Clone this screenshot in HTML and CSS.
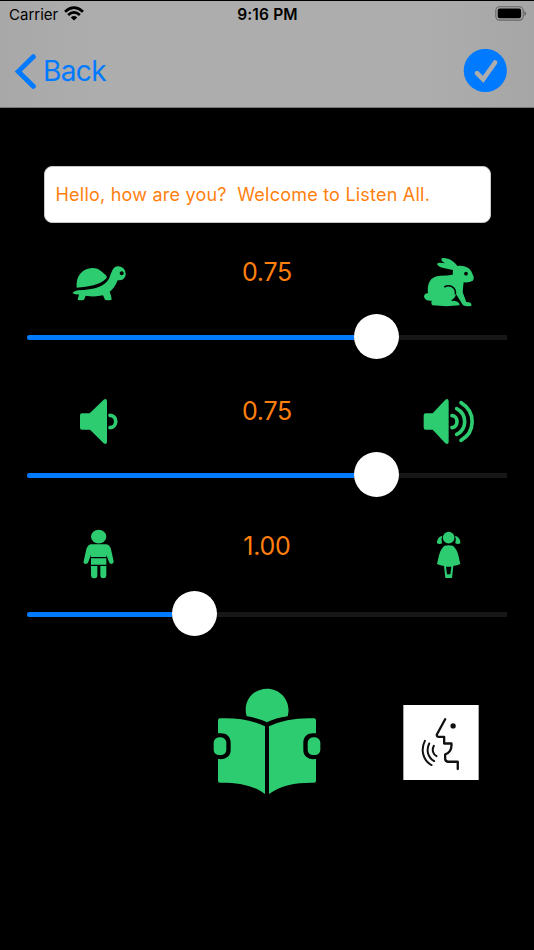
FILE: index.html
```html
<!DOCTYPE html>
<html lang="en">
<head>
<meta charset="utf-8">
<title>Listen All</title>
<link rel="stylesheet" href="styles.css">
</head>
<body>
<header class="header">
  <div class="status">
    <div class="carrier"><span class="carrier-name">Carrier</span>
      <svg class="wifi" viewBox="0 0 20 15"><g fill="none" stroke="#000" stroke-width="2.7"><path d="M1 5.7Q10-2.3 19 5.7"/><path d="M4.1 9.1Q10 3.7 15.9 9.1"/></g><path d="M6.8 11.4Q10 8.5 13.2 11.4L10 14.6Z"/></svg>
    </div>
    <span class="time">9:16 PM</span>
    <svg class="battery" viewBox="0 0 32 15"><rect x=".8" y=".7" width="27.4" height="13.4" rx="3.8" fill="none" stroke="#666" stroke-width="1.1"/><rect x="2.7" y="2.6" width="23.4" height="9.6" rx="2"/><path d="M29.4 5v5q1.7-.8 1.7-2.5T29.4 5Z" fill="#666"/></svg>
  </div>
  <nav class="nav">
    <a class="back"><svg class="chevron" viewBox="0 0 21 35"><path d="M18.300 2.700 3.200 17.500l15.100 14.800" fill="none" stroke="#007aff" stroke-width="5" stroke-linecap="round" stroke-linejoin="miter"/></svg><span class="back-label">Back</span></a>
    <svg class="done" viewBox="0 0 44 44"><circle cx="22.300" cy="21.500" r="21.600" fill="#007aff"/><path d="m14 24.100 6.100 6.300L32.100 13.500" fill="none" stroke="#adadad" stroke-width="4.600" stroke-linecap="round"/></svg>
  </nav>
</header>
<main>
  <div class="field"><span class="phrase">Hello, how are you?&nbsp; Welcome to Listen All.</span></div>

  <section class="control speed">
    <div class="row">
      <svg class="icon" viewBox="0 0 240 192"><path d="M50 113C47 77 67 55 98 54C117 54 124 65 136 74Q144 80 137 87C119 104 87 111 50 113Z"/><path fill-rule="evenodd" d="M37 129Q42 123 54 121C105 118 133 110 147 86C155 67 158 49 174 49C189 49 198 61 197 74C195 87 185 92 173 91C166 107 160 117 149 125Q155 139 155 149Q145 152 135 149L129 136Q103 142 77 137L72 149Q61 152 53 149L57 133Q48 135 37 129ZM185 64a6 6 0 1 0 .1 0Z"/></svg>
      <output class="value">0.75</output>
      <svg class="icon" viewBox="0 0 240 192"><path d="M42 140Q43 129 54 130C51 101 59 79 91 77Q111 77 128 74L129 60C110 56 88 53 82 44Q80 38 89 38L105 40Q91 33 95 25C112 21 131 33 142 48C162 45 182 53 187 71Q195 85 188 92Q178 99 161 97Q159 112 158 127L169 156Q187 156 184 167Q172 171 159 166L138 132Q136 145 122 152Q150 151 149 166Q110 171 68 166Q62 162 65 152Q46 154 42 140Z"/><path d="M103 111C120 101 139 113 136 133" fill="none" stroke="#000" stroke-width="4.500"/><circle cx="168" cy="71" r="5.500" fill="#000"/></svg>
    </div>
    <div class="slider"><div class="fill"></div><div class="thumb"></div></div>
  </section>

  <section class="control volume">
    <div class="row">
      <svg class="icon" viewBox="0 0 240 192"><path d="M66 70H89L131 29Q140 24 141 34V156Q140 166 131 160L90 119H66Q60 119 60 113V76Q60 70 66 70Z"/><path class="wave" d="M150 76C173 77 173 111 150 113"/></svg>
      <output class="value">0.75</output>
      <svg class="icon" viewBox="0 0 240 192"><path d="M47 70H68L106 29Q115 24 116 34V156Q115 166 106 160L68 119H47Q41 119 41 113V76Q41 70 47 70Z"/><path class="wave" d="M126 77C146 78 146 111 126 113M140 56C172 73 172 117 140 133M153 38C198 66 197 126 153 151"/></svg>
    </div>
    <div class="slider"><div class="fill"></div><div class="thumb"></div></div>
  </section>

  <section class="control pitch">
    <div class="row">
      <svg class="icon" viewBox="0 0 240 192"><ellipse cx="116" cy="50" rx="23" ry="20.500"/><path d="M93 73H139Q149 74 153 88L161 124Q162 131 155 132Q149 132 147 126L139 104V111H93V104L85 126Q83 132 77 132Q69 131 71 124L79 88Q83 74 93 73ZM93 115H139V134H93ZM93 138H112V168Q111 175 102 175Q94 175 93 168ZM121 138H139V168Q138 175 130 175Q122 175 121 168Z"/></svg>
      <output class="value">1.00</output>
      <svg class="icon" viewBox="0 0 240 192"><circle cx="116" cy="53" r="17.500"/><path d="M97 47Q92 57 96 70Q88 74 81 70Q80 52 97 47ZM135 47Q140 57 136 70Q144 74 151 70Q152 52 135 47ZM103 77Q116 74 129 77C145 91 147 115 151 132Q141 137 130 138L126 174H106L102 138Q91 137 81 132C86 114 87 91 103 77Z"/><path d="M108 140H124L121 163H111Z" fill="#000"/></svg>
    </div>
    <div class="slider"><div class="fill"></div><div class="thumb"></div></div>
  </section>

  <div class="actions">
    <svg class="reader" viewBox="0 0 402 372"><path d="M140 109C127 66 158 26 201 26C244 26 275 66 263 109Q227 114 201 127Q175 114 140 109Z"/><path d="M60 115Q139 112 195 139V342C160 315 111 307 60 308Q54 308 54 302V237C79 240 92 228 92 211V187C91 167 78 157 54 160V121Q54 115 60 115ZM342 115Q263 112 207 139V342C242 315 291 307 342 308Q348 308 348 302V237C323 240 310 228 310 211V187C311 167 324 157 348 160V121Q348 115 342 115Z"/><rect x="41" y="172" width="38" height="53" rx="16"/><rect x="323" y="172" width="38" height="53" rx="16"/></svg>
    <svg class="speak" viewBox="25 30 227 226"><rect x="25" y="30" width="227" height="226" fill="#fff"/><g fill="none" stroke="#111" stroke-width="7" stroke-linecap="round" stroke-linejoin="round"><path d="M151 73 126 119Q125 126 132 126H148V146H170C172 166 161 177 151 179V191Q151 201 161 201H189V223"/><path d="M90 138C77 163 83 197 110 211M103 146C93 166 99 189 118 199M117 153C110 166 115 179 125 184" stroke-width="6"/></g><circle cx="175" cy="93" r="8" fill="#111"/></svg>
  </div>
</main>
</body>
</html>
```
FILE: styles.css
```css
* { box-sizing: border-box; }
body {
  margin: 0;
  width: 534px;
  height: 950px;
  overflow: hidden;
  background: #000;
  font-family: Inter, "Liberation Sans", sans-serif;
}
svg { display: block; flex: none; }
.header {
  height: 108px;
  border-top: 1px solid #000;
  border-bottom: 1px solid #777;
  background: linear-gradient(90deg, #a8a8a8, #adadad 18%, #adadad 80%, #a6a6a6);
}
.status {
  display: grid;
  grid-template-columns: 1fr auto 1fr;
  align-items: center;
  height: 26px;
  padding: 0 7px 0 8px;
}
.carrier { display: flex; align-items: center; gap: 6px; padding-left: 1px; }
.carrier-name { font-size: 15px; }
.wifi { width: 20px; height: 15px; margin-top: -1px; }
.time { font-size: 15.500px; font-weight: 600; letter-spacing: 0.15px; }
.battery { width: 32px; height: 15px; margin-top: -1px; justify-self: end; }
.nav {
  display: flex;
  justify-content: space-between;
  align-items: center;
  height: 88px;
  padding: 0 27px 0 14.500px;
}
.back { display: flex; align-items: center; gap: 7.500px; color: #007aff; }
.chevron { width: 21px; height: 35px; }
.back-label { font-size: 28px; letter-spacing: -0.6px; }
.done { width: 44px; height: 44px; }
.field {
  display: flex;
  align-items: center;
  width: 447px;
  height: 57px;
  margin: 58px 0 27px 43.500px;
  padding: 0 11px 1px;
  border: 1.500px solid #c8c8c8;
  border-radius: 8px;
  background: #fff;
}
.phrase { color: #ff7f0e; font-size: 18px; letter-spacing: 0.22px; white-space: nowrap; }
.control { height: 140px; }
.volume { height: 130px; }
.pitch { height: 160px; }
.row {
  display: grid;
  grid-template-columns: 80px 254px 80px;
  justify-content: space-between;
  height: 64px;
  padding: 0 44px 0 60px;
}
.icon { width: 80px; height: 64px; fill: #2ecc71; }
.wave { fill: none; stroke: #2ecc71; stroke-width: 11; stroke-linecap: round; }
.value {
  width: 254px;
  margin-left: -8px;
  padding-top: 6px;
  color: #ff7f0e;
  font-size: 25px;
  letter-spacing: -0.25px;
  line-height: 32px;
  text-align: center;
}
.volume .value { padding-top: 5px; }
.pitch .value { padding-top: 10px; }
.slider {
  display: flex;
  align-items: center;
  height: 45px;
  margin: 0 27px;
  background: linear-gradient(#171717, #171717) 0 21px / 100% 5px no-repeat;
}
.volume .slider { margin-top: -2px; }
.pitch .slider { margin-top: 7px; }
.fill { width: 327px; height: 5px; margin-top: 2px; border-radius: 3px 0 0 3px; background: #007aff; }
.pitch .fill { width: 145px; }
.thumb { width: 45px; height: 45px; border-radius: 50%; background: #fff; }
.actions { display: flex; align-items: center; gap: 69px; padding-left: 200px; }
.reader { width: 134px; height: 124px; fill: #2ecc71; }
.speak { width: 76px; height: 75px; }
```
